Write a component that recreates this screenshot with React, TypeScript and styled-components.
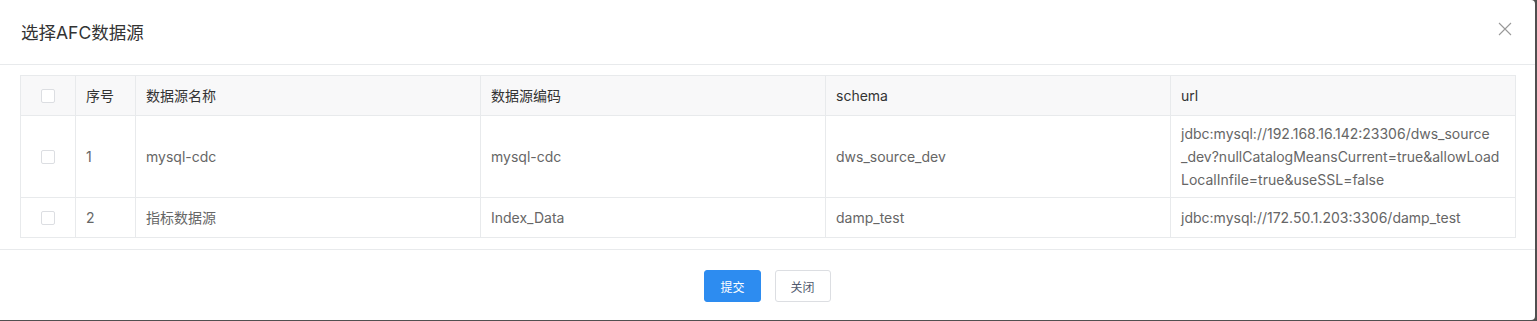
import React from "react";
import styled, { createGlobalStyle } from "styled-components";

const Global = createGlobalStyle`
  html, body { margin: 0; padding: 0; background: #505050; }
  body { font-family: Inter, "Noto Sans CJK SC", sans-serif; }
  * { box-sizing: border-box; }
`;

const Dialog = styled.div`
  width: 1535px;
  height: 320px;
  background: #fff;
  border-radius: 0 4px 4px 0;
  display: flex;
  flex-direction: column;
  overflow: hidden;
`;

const Header = styled.div`
  height: 65px;
  flex: none;
  border-bottom: 1px solid #e8eaec;
  display: flex;
  align-items: center;
  justify-content: space-between;
  padding: 0 23px 0 21px;
`;

const Title = styled.div`
  font-size: 17.5px;
  color: #333;
  padding-bottom: 1px;
`;

const CloseBtn = styled.button`
  border: none;
  background: none;
  padding: 0;
  width: 14px;
  height: 14px;
  display: flex;
  cursor: pointer;
  margin-top: -6px;
`;

const Body = styled.div`
  padding: 10px 19px 11px 20px;
  border-bottom: 1px solid #e8eaec;
`;

const Table = styled.table`
  width: 1496px;
  border-collapse: collapse;
  table-layout: fixed;
  font-size: 14px;
  line-height: 21px;
  border: 1px solid #e8eaec;
`;

const Th = styled.th<{ $w?: number; $center?: boolean }>`
  width: ${(p) => (p.$w ? `${p.$w}px` : "auto")};
  height: 40px;
  background: #f8f8f9;
  border: 1px solid #e8eaec;
  padding: 9px 10px;
  text-align: ${(p) => (p.$center ? "center" : "left")};
  font-weight: normal;
  color: #333;
  vertical-align: middle;
`;

const Td = styled.td<{ $center?: boolean; $multi?: boolean }>`
  border: 1px solid #e8eaec;
  padding: ${(p) => (p.$multi ? "6px 10px" : "9px 10px")};
  text-align: ${(p) => (p.$center ? "center" : "left")};
  color: #666;
  vertical-align: middle;
  line-height: ${(p) => (p.$multi ? "23px" : "21px")};
`;

const UrlLine = styled.span`
  display: block;
  white-space: nowrap;
`;

const Check = styled.span`
  display: inline-block;
  width: 14px;
  height: 14px;
  border: 1px solid #dcdee2;
  border-radius: 2px;
  background: #fff;
  vertical-align: middle;
  margin-top: -3px;
`;

const Footer = styled.div`
  flex: 1;
  display: flex;
  justify-content: center;
  align-items: flex-start;
  padding-top: 20px;
  gap: 14px;
`;

const Button = styled.button<{ $primary?: boolean }>`
  height: 32px;
  padding: 0 15px;
  font-size: 12px;
  font-family: inherit;
  border-radius: 3px;
  border: 1px solid ${(p) => (p.$primary ? "#2d8cf0" : "#dcdee2")};
  background: ${(p) => (p.$primary ? "#2d8cf0" : "#fff")};
  color: ${(p) => (p.$primary ? "#fff" : "#515a6e")};
  cursor: pointer;
`;

const rows = [
  {
    idx: 1,
    name: "mysql-cdc",
    code: "mysql-cdc",
    schema: "dws_source_dev",
    url: [
      "jdbc:mysql://192.168.16.142:23306/dws_source",
      "_dev?nullCatalogMeansCurrent=true&allowLoad",
      "LocalInfile=true&useSSL=false",
    ],
  },
  {
    idx: 2,
    name: "指标数据源",
    code: "Index_Data",
    schema: "damp_test",
    url: ["jdbc:mysql://172.50.1.203:3306/damp_test"],
  },
];

export default function App() {
  return (
    <>
      <Global />
      <Dialog>
        <Header>
          <Title>选择AFC数据源</Title>
          <CloseBtn aria-label="close">
            <svg width="14" height="14" viewBox="0 0 14 14">
              <path d="M1 1 L13 13 M13 1 L1 13" stroke="#999" strokeWidth="1.1" fill="none" />
            </svg>
          </CloseBtn>
        </Header>
        <Body>
          <Table>
            <thead>
              <tr>
                <Th $w={55} $center>
                  <Check />
                </Th>
                <Th $w={60}>序号</Th>
                <Th $w={345}>数据源名称</Th>
                <Th $w={345}>数据源编码</Th>
                <Th $w={345}>schema</Th>
                <Th>url</Th>
              </tr>
            </thead>
            <tbody>
              {rows.map((r) => (
                <tr key={r.idx}>
                  <Td $center>
                    <Check />
                  </Td>
                  <Td>{r.idx}</Td>
                  <Td>{r.name}</Td>
                  <Td>{r.code}</Td>
                  <Td>{r.schema}</Td>
                  <Td $multi={r.url.length > 1}>
                    {r.url.map((line) => (
                      <UrlLine key={line}>{line}</UrlLine>
                    ))}
                  </Td>
                </tr>
              ))}
            </tbody>
          </Table>
        </Body>
        <Footer>
          <Button $primary>提交</Button>
          <Button>关闭</Button>
        </Footer>
      </Dialog>
    </>
  );
}
